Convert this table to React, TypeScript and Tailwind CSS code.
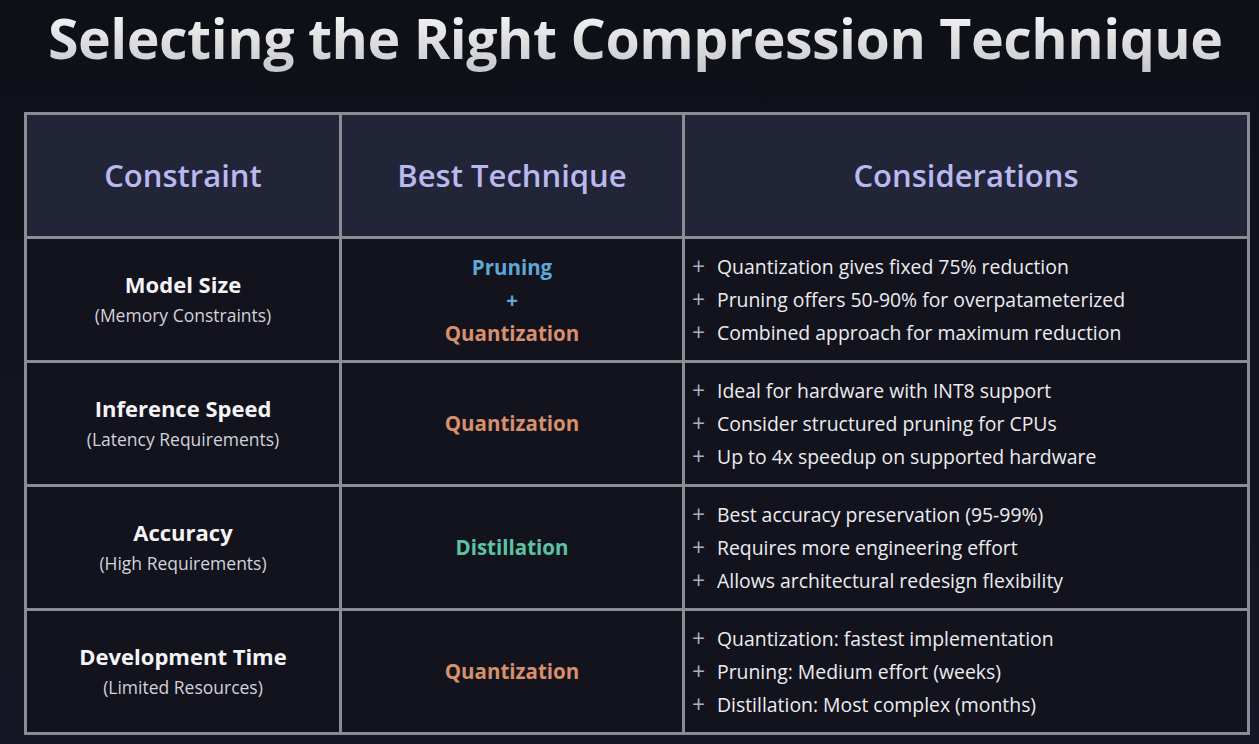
import React from 'react';

interface Row {
  label: string;
  note: string;
  technique: React.ReactNode;
  points: string[];
}

const font = { fontFamily: '"Open Sans", "Noto Sans", sans-serif' };

const quant = <span className="text-[#d8906c]">Quantization</span>;

const rows: Row[] = [
  {
    label: 'Model Size',
    note: '(Memory Constraints)',
    technique: (
      <div className="flex flex-col items-center gap-[5px] leading-[28px]">
        <span className="text-[#5fa8d6]">Pruning</span>
        <span className="text-[#5fa8d6]">+</span>
        {quant}
      </div>
    ),
    points: [
      'Quantization gives fixed 75% reduction',
      'Pruning offers 50-90% for overpatameterized',
      'Combined approach for maximum reduction',
    ],
  },
  {
    label: 'Inference Speed',
    note: '(Latency Requirements)',
    technique: quant,
    points: [
      'Ideal for hardware with INT8 support',
      'Consider structured pruning for CPUs',
      'Up to 4x speedup on supported hardware',
    ],
  },
  {
    label: 'Accuracy',
    note: '(High Requirements)',
    technique: <span className="text-[#5cc4a4]">Distillation</span>,
    points: [
      'Best accuracy preservation (95-99%)',
      'Requires more engineering effort',
      'Allows architectural redesign flexibility',
    ],
  },
  {
    label: 'Development Time',
    note: '(Limited Resources)',
    technique: quant,
    points: [
      'Quantization: fastest implementation',
      'Pruning: Medium effort (weeks)',
      'Distillation: Most complex (months)',
    ],
  },
];

export default function App() {
  return (
    <div
      className="flex h-[744px] w-[1259px] flex-col overflow-hidden bg-gradient-to-b from-[#0e1018] to-[#151824] text-white"
      style={font}
    >
      <div className="flex h-[112px] items-start pl-[48px]">
        <h1 className="bg-gradient-to-b from-[#ffffff] to-[#c4c4c8] bg-clip-text text-[55.5px] font-bold leading-[76px] tracking-[-0.5px] whitespace-nowrap text-transparent">
          Selecting the Right Compression Technique
        </h1>
      </div>

      <div className="ml-[24px] mr-[9px] grid grid-cols-[312px_340px_1fr] gap-[3px] border-[3px] border-[#8c8c94] bg-[#8c8c94]">
        {['Constraint', 'Best Technique', 'Considerations'].map((h) => (
          <div
            key={h}
            className="flex h-[121px] items-center justify-center bg-[#222538] text-[31px] font-semibold text-[#b9b9f0]"
          >
            {h}
          </div>
        ))}

        {rows.map((row) => (
          <React.Fragment key={row.label}>
            <div className="flex h-[121px] flex-col items-center justify-center bg-[#13131d]">
              <span className="text-[22px] font-bold leading-[31px] text-[#f4f4f6]">{row.label}</span>
              <span className="text-[17.5px] leading-[31px] text-[#d2d2da]">{row.note}</span>
            </div>
            <div className="flex h-[121px] items-center justify-center bg-[#13131d] text-[20.5px] font-bold">
              {row.technique}
            </div>
            <div className="flex h-[121px] flex-col justify-center bg-[#13131d] pl-[7px]">
              {row.points.map((p) => (
                <div key={p} className="flex h-[33px] items-center text-[19.4px] text-[#ececf0]">
                  <span className="w-[25px] text-[23px] leading-none text-[#aeaeba]">+</span>
                  <span>{p}</span>
                </div>
              ))}
            </div>
          </React.Fragment>
        ))}
      </div>
    </div>
  );
}
